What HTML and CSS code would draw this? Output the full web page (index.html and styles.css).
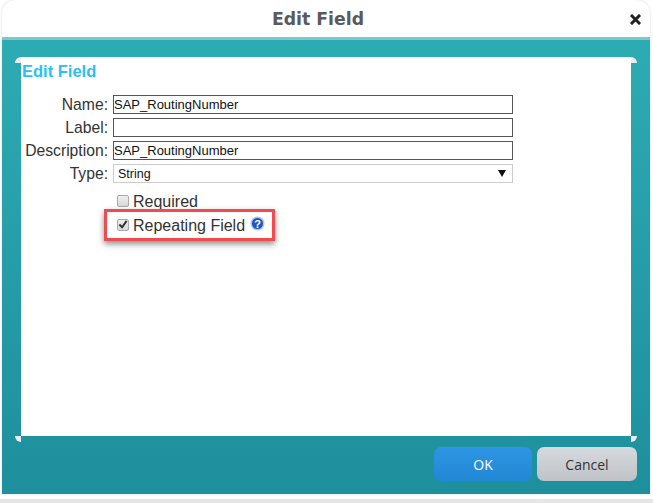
FILE: index.html
```html
<!DOCTYPE html>
<html lang="en">
<head>
<meta charset="utf-8">
<title>Edit Field</title>
<link rel="stylesheet" href="styles.css">
</head>
<body>
<div class="dialog">
  <header class="head">
    <h1 class="title">Edit Field</h1>
    <svg class="close" width="11" height="11" viewBox="0 0 11 11"><path d="M2 2l7 7M9 2l-7 7" stroke="#222" stroke-width="3" stroke-linecap="square" fill="none"/></svg>
  </header>
  <main class="body">
    <section class="panel">
      <i class="corner tl"></i><i class="corner tr"></i><i class="corner bl"></i><i class="corner br"></i>
      <h2 class="heading">Edit Field</h2>
      <form class="form">
        <label class="lbl">Name:</label><input class="field" type="text" value="SAP_RoutingNumber">
        <label class="lbl">Label:</label><input class="field" type="text" value="">
        <label class="lbl">Description:</label><input class="field" type="text" value="SAP_RoutingNumber">
        <label class="lbl">Type:</label>
        <div class="select"><span>String</span><svg width="8" height="7" viewBox="0 0 8 7"><path d="M0 0h8L4 7z" fill="#111"/></svg></div>
      </form>
      <div class="checks">
        <div class="check"><span class="box"></span><span>Required</span></div>
        <div class="check highlighted">
          <span class="box"><svg width="11" height="11" viewBox="0 0 11 11"><path d="M1.500 5.500l3 3 5-7" stroke="#333" stroke-width="2.200" fill="none"/></svg></span>
          <span>Repeating Field</span>
          <svg class="help" width="15" height="15" viewBox="0 0 15 15"><circle cx="7.500" cy="7.500" r="7" fill="#a9c6ee"/><circle cx="7.500" cy="7.500" r="5.500" fill="#1f56b8"/><text x="7.500" y="11.500" text-anchor="middle" class="q">?</text></svg>
        </div>
      </div>
    </section>
    <footer class="actions">
      <button class="btn ok" type="button">OK</button>
      <button class="btn cancel" type="button">Cancel</button>
    </footer>
  </main>
</div>
</body>
</html>
```
FILE: styles.css
```css
* { box-sizing: border-box; }
html, body { margin: 0; height: 100%; }
body {
  background: linear-gradient(#fff 499px, #e6e6e6 499px);
  font-family: "Liberation Sans", Arial, sans-serif;
  overflow: hidden;
}
.dialog {
  width: 648px;
  margin-left: 2px;
  height: 494px;
  background: #fff;
  border-radius: 14px 14px 0 0;
  box-shadow: 0 0 3px rgba(0,0,0,.15);
  overflow: hidden;
  display: flex;
  flex-direction: column;
}
.head {
  height: 37px;
  flex: none;
  display: flex;
  align-items: center;
  justify-content: center;
  padding-right: 16px;
  position: relative;
}
.title {
  margin: 0;
  font-family: "DejaVu Sans", Verdana, sans-serif;
  font-size: 17.300px;
  font-weight: 700;
  color: #595a60;
}
.close { position: absolute; right: 9px; top: 14px; }
.body {
  flex: 1;
  background: linear-gradient(#2dabb3, #1e8f9d);
  border-top: 3px solid #7cc8cc;
  padding: 17px 19px 0;
  display: flex;
  flex-direction: column;
}
.panel {
  height: 379px;
  flex: none;
  background: #fff;
  position: relative;
}
.corner { position: absolute; width: 6px; height: 6px; background: #ececec; }
.tl { left: -6px; top: 0; border-radius: 6px 0 0 0; }
.tr { right: -6px; top: 0; border-radius: 0 6px 0 0; }
.bl { left: -6px; bottom: -6px; border-radius: 0 0 0 6px; }
.br { right: -6px; bottom: -6px; border-radius: 0 0 6px 0; }
.heading {
  margin: 0;
  padding: 5px 0 0 1px;
  height: 38px;
  font-size: 16.500px;
  font-weight: 700;
  color: #29c0f4;
}
.form {
  display: grid;
  grid-template-columns: 87px 400px;
  column-gap: 5px;
  row-gap: 4px;
  align-items: center;
}
.lbl { text-align: right; font-size: 15.700px; color: #333; line-height: 18px; }
.field {
  height: 19px;
  margin: 0;
  padding: 0;
  border: 1px solid #555;
  background: #fff;
  font: 13px "Liberation Sans", Arial, sans-serif;
  color: #111;
  border-radius: 0;
  outline: 0;
}
.select {
  height: 19px;
  border: 1px solid #ccc;
  display: flex;
  align-items: center;
  justify-content: space-between;
  padding: 0 6px 0 4px;
  font-size: 12.500px;
  color: #111;
}
.checks { padding: 9px 0 0 96px; display: flex; flex-direction: column; gap: 5px; align-items: flex-start; }
.check { display: flex; align-items: center; gap: 4px; font-size: 16px; color: #333; height: 19px; }
.box {
  width: 12px;
  height: 12px;
  margin-top: -2px;
  background: linear-gradient(#eee, #d8d8d8);
  border: 1px solid #aaa;
  border-radius: 2px;
  display: flex;
  align-items: center;
  justify-content: center;
}
.highlighted { position: relative; }
.highlighted::after {
  content: "";
  box-sizing: border-box;
  position: absolute;
  left: -13px;
  top: -7px;
  width: 171px;
  height: 32px;
  border: 3px solid #ee4c4f;
  box-shadow: 0 3px 6px rgba(0,0,0,.45), inset 0 0 2px rgba(0,0,0,.1);
  pointer-events: none;
}
.help { margin: -5px 0 0 1px; }
.q { font: 700 11px "Liberation Sans", sans-serif; fill: #fff; }
.actions { display: flex; justify-content: flex-end; gap: 5px; padding-top: 11px; margin-right: -6px; }
.btn {
  height: 34px;
  border: 0;
  border-radius: 7px;
  font: 14px "Open Sans", sans-serif;
  padding: 0;
}
.ok { width: 98px; background: linear-gradient(#2c96e4, #2387d3); color: #fff; }
.cancel { width: 100px; background: linear-gradient(#d6dade, #bfc3c8); color: #333; }
```
